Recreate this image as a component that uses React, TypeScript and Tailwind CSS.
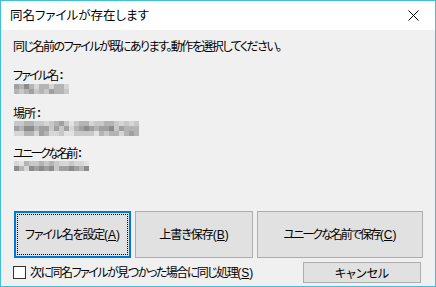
import React from "react";

const font = "[font-family:'Noto_Sans_CJK_JP','Noto_Sans',sans-serif] [font-feature-settings:'palt']";

function Blur({ rows }: { rows: string[][] }) {
  return (
    <div className="flex flex-col">
      {rows.map((r, i) => (
        <div key={i} className="flex">
          {r.map((c, j) => (
            <div key={j} className="w-[5px] h-[5px]" style={{ background: c }} />
          ))}
        </div>
      ))}
    </div>
  );
}

const a = "#c8c8c8", b = "#b4b4b4", c = "#a0a0a0", d = "#d6d6d6", e = "#8c8c8c", f = "#e2e2e2";

const blur1 = [
  [c, b, e, b, d, b, b, d, b, b, d],
  [b, a, b, c, a, b, a, c, b, b, a],
];
const blur2 = [
  [a, a, b, b, a, a, d, a, b, c, a, f, a, b, b, d, a, a, b, b, a, d, a, d, a],
  [c, b, e, e, b, c, c, a, c, a, c, d, b, c, e, c, b, c, c, e, a, c, b, b, b],
  [d, d, b, b, d, c, b, d, d, a, f, f, a, a, a, a, f, b, a, b, b, d, b, c, b],
];
const blur3 = [
  [d, f, b, a, a, b, a, b, a, d, d, a, d, d, f],
  [e, b, d, e, c, e, c, e, a, c, c, e, c, b, e],
];

function Mn({ ch }: { ch: string }) {
  return (
    <span className="[font-family:'Liberation_Sans',sans-serif] text-[12px] tracking-normal">
      (<span className="underline underline-offset-[1px]">{ch}</span>)
    </span>
  );
}

function Label({ text, cls }: { text: string; cls: string }) {
  return (
    <div className="leading-[16px] h-[16px] flex">
      <span className={cls}>{text}</span>
      <span className="[font-family:'Liberation_Sans',sans-serif] ml-[2px] tracking-normal font-bold">:</span>
    </div>
  );
}

export default function App() {
  return (
    <div className={`w-[436px] h-[287px] border border-[#3fbfd9] flex flex-col text-[12px] text-black ${font}`}>
      <div className="h-[29px] bg-white flex items-center justify-between pl-[9px] pr-[16px] shrink-0">
        <span className="text-[12.5px] leading-none">同名ファイルが存在します</span>
        <svg width="11" height="11" viewBox="0 0 11 11">
          <path d="M0.5 0.5 L10.5 10.5 M10.5 0.5 L0.5 10.5" stroke="#000" strokeWidth="1" />
        </svg>
      </div>
      <div className="flex-1 bg-[#f0f0f0] px-[12px] pt-[8px] flex flex-col">
        <div className="leading-[16px] h-[16px] tracking-[-1.5px]">同じ名前のファイルが既にあります。動作を選択してください。</div>
        <div className="mt-[13px]"><Label text="ファイル名" cls="tracking-[-1.8px]" /></div>
        <div className="mt-[1px] ml-[1px] h-[10px]"><Blur rows={blur1} /></div>
        <div className="mt-[11px]"><Label text="場所" cls="tracking-[-1px]" /></div>
        <div className="mt-[0px] ml-[1px] h-[15px]"><Blur rows={blur2} /></div>
        <div className="mt-[9px]"><Label text="ユニークな名前" cls="tracking-[-2.6px]" /></div>
        <div className="mt-[0px] ml-[1px] h-[10px]"><Blur rows={blur3} /></div>
        <div className="flex mt-[40px] ml-[1px] gap-[4px]">
          <div className="relative w-[117px] h-[47px] bg-[#e1e1e1] border-2 border-[#0078d7] flex items-center justify-center">
            <div className="absolute inset-[1px] border border-dotted border-black" />
            <span className="tracking-[-1.2px]">ファイル名を設定<Mn ch="A" /></span>
          </div>
          <div className="w-[118px] h-[47px] bg-[#e1e1e1] border border-[#adadad] flex items-center justify-center">
            <span className="tracking-[-1px]">上書き保存<Mn ch="B" /></span>
          </div>
          <div className="w-[166px] h-[47px] bg-[#e1e1e1] border border-[#adadad] flex items-center justify-center">
            <span className="tracking-[-2px]">ユニークな名前で保存<Mn ch="C" /></span>
          </div>
        </div>
        <div className="flex items-center mt-[4px] justify-between pr-[2px]">
          <div className="flex items-center gap-[4px]">
            <div className="w-[13px] h-[13px] border border-[#333] bg-white" />
            <span className="leading-[16px] tracking-[-1.5px]">次に同名ファイルが見つかった場合に同じ処理<Mn ch="S" /></span>
          </div>
          <div className="w-[118px] h-[21px] bg-[#e1e1e1] border border-[#adadad] flex items-center justify-center">
            キャンセル
          </div>
        </div>
      </div>
    </div>
  );
}
